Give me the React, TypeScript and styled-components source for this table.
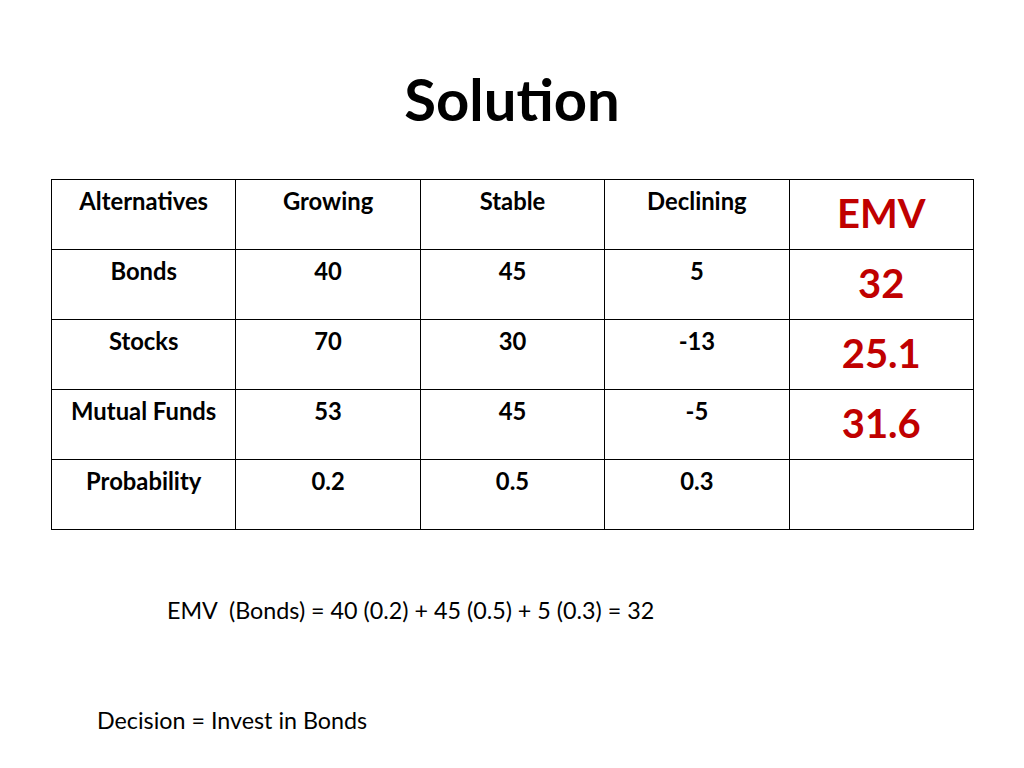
import React from "react";
import styled, { createGlobalStyle } from "styled-components";

const Global = createGlobalStyle`
  html, body { margin: 0; padding: 0; background: #fff; }
  body { font-family: Lato, "Liberation Sans", sans-serif; color: #000; }
`;

const Slide = styled.div`
  width: 1024px;
  height: 768px;
  box-sizing: border-box;
  display: flex;
  flex-direction: column;
  background: #fff;
`;

const Title = styled.h1`
  margin: 68px 0 0 0;
  height: 62px;
  line-height: 62px;
  text-align: center;
  font-size: 58px;
  font-weight: 700;
`;

const Table = styled.table`
  margin: 49px 0 0 51px;
  border-collapse: collapse;
  table-layout: fixed;
  width: 923px;
`;

const Cell = styled.td<{ $emv?: boolean }>`
  width: 184px;
  height: 70px;
  box-sizing: border-box;
  border: 1.4px solid #000;
  vertical-align: top;
  text-align: center;
  padding: ${(p) => (p.$emv ? "9px 0 0 0" : "7px 0 0 0")};
  font-weight: 700;
  font-size: ${(p) => (p.$emv ? "40px" : "23.8px")};
  line-height: ${(p) => (p.$emv ? "48px" : "28px")};
  color: ${(p) => (p.$emv ? "#c00000" : "#000")};
`;

const Formula = styled.p<{ $left: number; $top: number }>`
  margin: ${(p) => p.$top}px 0 0 ${(p) => p.$left}px;
  font-size: 23.3px;
  line-height: 28px;
`;

const rows: string[][] = [
  ["Alternatives", "Growing", "Stable", "Declining", "EMV"],
  ["Bonds", "40", "45", "5", "32"],
  ["Stocks", "70", "30", "-13", "25.1"],
  ["Mutual Funds", "53", "45", "-5", "31.6"],
  ["Probability", "0.2", "0.5", "0.3", ""],
];

export default function App() {
  return (
    <>
      <Global />
      <Slide>
        <Title>Solution</Title>
        <Table>
          <tbody>
            {rows.map((r, i) => (
              <tr key={i}>
                {r.map((c, j) => (
                  <Cell key={j} $emv={j === 4}>
                    {c}
                  </Cell>
                ))}
              </tr>
            ))}
          </tbody>
        </Table>
        <Formula $left={167} $top={66}>
          EMV&nbsp; (Bonds) = 40 (0.2) + 45 (0.5) + 5 (0.3) = 32
        </Formula>
        <Formula $left={97} $top={82}>
          Decision = Invest in Bonds
        </Formula>
      </Slide>
    </>
  );
}
